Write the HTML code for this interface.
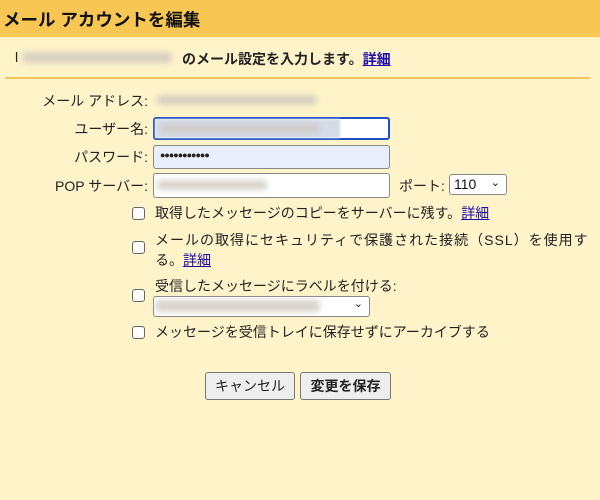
<!DOCTYPE html>
<html><head><meta charset="utf-8"><style>
body{margin:0;width:600px;height:500px;background:#fef3c9;font-family:"Liberation Sans","Noto Sans CJK JP",sans-serif;color:#222;position:relative;overflow:hidden;font-size:14px}
.hd{position:absolute;left:0;top:0;width:600px;height:37px;background:#f7c653}
.t{position:absolute;white-space:nowrap}
.blur{position:absolute;background:#cfc9c0;filter:blur(3px);border-radius:4px;opacity:.8}
.in{position:absolute;border:1px solid #888;border-radius:3px;background:#fff;box-sizing:border-box}
.cb{position:absolute;width:13px;height:13px;border:1px solid #666;border-radius:3px;background:#fff;box-sizing:border-box}
a{color:#1a0dab;text-decoration:underline}
.btn{position:absolute;border:1px solid #777;border-radius:3px;background:#eee;box-sizing:border-box;font-size:14px;text-align:center;line-height:26px}
</style></head><body>
<div class="hd"></div>
<div class="t" style="left:3px;top:7px;font-size:17.5px;font-weight:bold;color:#111">メール アカウントを編集</div>
<div class="t" style="left:15px;top:49px;font-size:14px">l</div>
<div class="blur" style="left:22px;top:52px;width:150px;height:11px"></div>
<div class="t" style="left:182px;top:49px;font-weight:bold">のメール設定を入力します。<a href="#" style="color:#1a0dab">詳細</a></div>
<div style="position:absolute;left:5px;top:77px;width:585px;height:2px;background:#f1c35a"></div>

<div class="t" style="right:452px;top:91px">メール アドレス:</div>
<div class="blur" style="left:157px;top:95px;width:160px;height:10px"></div>

<div class="t" style="right:452px;top:119px">ユーザー名:</div>
<div class="in" style="left:153px;top:117px;width:237px;height:23px;border:2px solid #1f4fc4"></div>
<div style="position:absolute;left:155px;top:119px;width:185px;height:19px;background:#d5dbe8;filter:blur(1px)"></div>
<div class="blur" style="left:160px;top:124px;width:160px;height:9px"></div>

<div class="t" style="right:452px;top:147px">パスワード:</div>
<div class="in" style="left:153px;top:145px;width:237px;height:24px;background:#e8eefb"></div>
<div class="t" style="left:160px;top:150px;font-size:9px;letter-spacing:-1px">●●●●●●●●●●●</div>

<div class="t" style="right:452px;top:176px">POP サーバー:</div>
<div class="in" style="left:153px;top:173px;width:237px;height:25px"></div>
<div class="blur" style="left:157px;top:180px;width:110px;height:10px"></div>
<div class="t" style="left:399px;top:176px">ポート:</div>
<div class="in" style="left:449px;top:174px;width:58px;height:21px;font-size:14px;line-height:19px;padding-left:4px;color:#111">110<span style="position:absolute;right:6px;top:-1px;font-size:11px">&#8964;</span></div>

<div class="cb" style="left:132px;top:207px"></div>
<div class="t" style="left:155px;top:203px">取得したメッセージのコピーをサーバーに残す。<a href="#">詳細</a></div>

<div class="cb" style="left:132px;top:241px"></div>
<div class="t" style="left:155px;top:230px;letter-spacing:1px">メールの取得にセキュリティで保護された接続（SSL）を使用す</div>
<div class="t" style="left:155px;top:250px">る。<a href="#">詳細</a></div>

<div class="cb" style="left:132px;top:289px"></div>
<div class="t" style="left:155px;top:276px">受信したメッセージにラベルを付ける:</div>
<div class="in" style="left:153px;top:296px;width:217px;height:21px"><span style="position:absolute;right:6px;top:0;font-size:11px">&#8964;</span></div>
<div class="blur" style="left:155px;top:300px;width:165px;height:12px"></div>

<div class="cb" style="left:132px;top:326px"></div>
<div class="t" style="left:155px;top:322px">メッセージを受信トレイに保存せずにアーカイブする</div>

<div class="btn" style="left:205px;top:372px;width:90px;height:28px">キャンセル</div>
<div class="btn" style="left:300px;top:372px;width:91px;height:28px;font-weight:bold">変更を保存</div>
</body></html>
